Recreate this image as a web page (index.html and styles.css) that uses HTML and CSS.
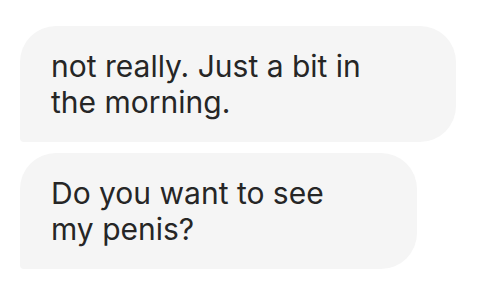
FILE: index.html
```html
<!DOCTYPE html>
<html>
<head>
<meta charset="utf-8">
<link rel="stylesheet" href="styles.css">
</head>
<body>
<div class="thread">
  <div class="bubble b1">not really. Just a bit in<br>the morning.</div>
  <div class="bubble b2">Do you want to see<br>my penis?</div>
</div>
</body>
</html>
```
FILE: styles.css
```css
html, body {
  margin: 0;
  padding: 0;
  background: #ffffff;
}
.thread {
  display: flex;
  flex-direction: column;
  align-items: flex-start;
  gap: 11px;
  padding: 26px 0 0 20px;
}
.bubble {
  box-sizing: border-box;
  background: #f5f5f5;
  color: #262626;
  font-family: Inter, "Liberation Sans", sans-serif;
  font-size: 30px;
  line-height: 36px;
  padding: 22px 31px;
  border-radius: 36px 36px 36px 4px;
  white-space: nowrap;
}
.b1 {
  width: 436px;
  height: 116px;
}
.b2 {
  width: 397px;
  height: 116px;
}
```
